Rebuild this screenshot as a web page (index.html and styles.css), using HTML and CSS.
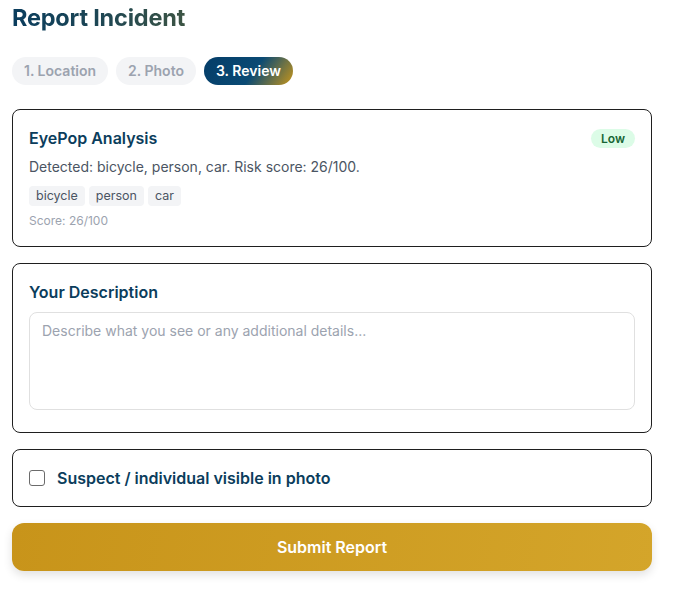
FILE: index.html
```html
<!DOCTYPE html>
<html>
<head>
<meta charset="utf-8">
<link rel="stylesheet" href="styles.css">
</head>
<body>
<div class="page">
  <h1 class="title">Report Incident</h1>
  <div class="steps">
    <span class="step">1. Location</span>
    <span class="step">2. Photo</span>
    <span class="step active">3. Review</span>
  </div>
  <div class="card">
    <div class="card-head">
      <span class="card-title">EyePop Analysis</span>
      <span class="badge">Low</span>
    </div>
    <p class="detected">Detected: bicycle, person, car. Risk score: 26/100.</p>
    <div class="tags">
      <span class="tag">bicycle</span>
      <span class="tag">person</span>
      <span class="tag">car</span>
    </div>
    <p class="score">Score: 26/100</p>
  </div>
  <div class="card">
    <div class="card-title label">Your Description</div>
    <textarea class="desc" placeholder="Describe what you see or any additional details..."></textarea>
  </div>
  <div class="card check-card">
    <label class="check">
      <input type="checkbox" class="box">
      <span>Suspect / individual visible in photo</span>
    </label>
  </div>
  <button class="submit">Submit Report</button>
</div>
</body>
</html>
```

FILE: styles.css
```css
* { box-sizing: border-box; }
html, body { margin: 0; padding: 0; background: #fff; }
body { font-family: Inter, "Noto Sans", sans-serif; color: #111827; }
.page { width: 664px; padding: 4px 12px 12px 12px; }
.title {
  margin: 0;
  font-size: 23.5px;
  line-height: 27px;
  font-weight: 700;
  letter-spacing: -0.2px;
  background: linear-gradient(90deg, #0a3d5e 0%, #1d4654 50%, #3c5444 100%);
  -webkit-background-clip: text;
  background-clip: text;
  color: transparent;
  display: inline-block;
}
.steps { display: flex; gap: 8px; margin-top: 26px; }
.step {
  height: 28px;
  line-height: 28px;
  padding: 0 12px;
  border-radius: 999px;
  background: #f3f4f6;
  color: #9ca3af;
  font-size: 14px;
  font-weight: 600;
}
.step.active {
  color: #fff;
  background: linear-gradient(125deg, #043d68 0%, #0a4a74 55%, #c8961a 100%);
}
.card {
  margin-top: 24px;
  border: 1px solid #1f1f1f;
  border-radius: 8px;
  padding: 16px 16px;
}
.card + .card { margin-top: 16px; }
.card-head { display: flex; justify-content: space-between; align-items: center; height: 24px; }
.card-title { font-size: 16px; font-weight: 600; color: #0b3d5c; line-height: 24px; }
.badge {
  background: #dcfce7;
  color: #166534;
  font-size: 12px;
  font-weight: 600;
  padding: 0 10px;
  height: 19px;
  line-height: 19px;
  border-radius: 999px;
}
.detected { margin: 7px 0 0; font-size: 14px; line-height: 20px; color: #4b5563; }
.tags { display: flex; gap: 4px; margin-top: 9px; }
.tag {
  background: #f3f4f6;
  color: #4b5563;
  font-size: 12.5px;
  line-height: 20px;
  padding: 0 7px;
  border-radius: 4px;
}
.score { margin: 6px 0 0; font-size: 12px; line-height: 18px; color: #9ca3af; }
.label { margin-bottom: 8px; }
.desc {
  display: block;
  width: 100%;
  height: 98px;
  border: 1px solid #e0e0e0;
  border-radius: 8px;
  padding: 8px 12px;
  font-family: Inter, "Noto Sans", sans-serif;
  font-size: 14px;
  line-height: 20px;
  resize: none;
  margin-bottom: 6px;
  outline: none;
}
.desc::placeholder { color: #9ca3af; }
.check-card { padding: 16px; }
.check { display: flex; align-items: center; gap: 12px; height: 24px; font-size: 16px; font-weight: 600; color: #0b3d5c; }
.box {
  -webkit-appearance: none;
  appearance: none;
  margin: 0;
  width: 16px;
  height: 16px;
  border: 1px solid #6b6b6b;
  border-radius: 3px;
  background: #fff;
}
.submit {
  margin-top: 16px;
  width: 100%;
  height: 48px;
  border: none;
  border-radius: 12px;
  background: linear-gradient(100deg, #c8941a 0%, #d4a52a 100%);
  color: #fff;
  font-family: Inter, "Noto Sans", sans-serif;
  font-size: 16px;
  font-weight: 600;
  box-shadow: 0 4px 10px rgba(0,0,0,0.12);
}
```
